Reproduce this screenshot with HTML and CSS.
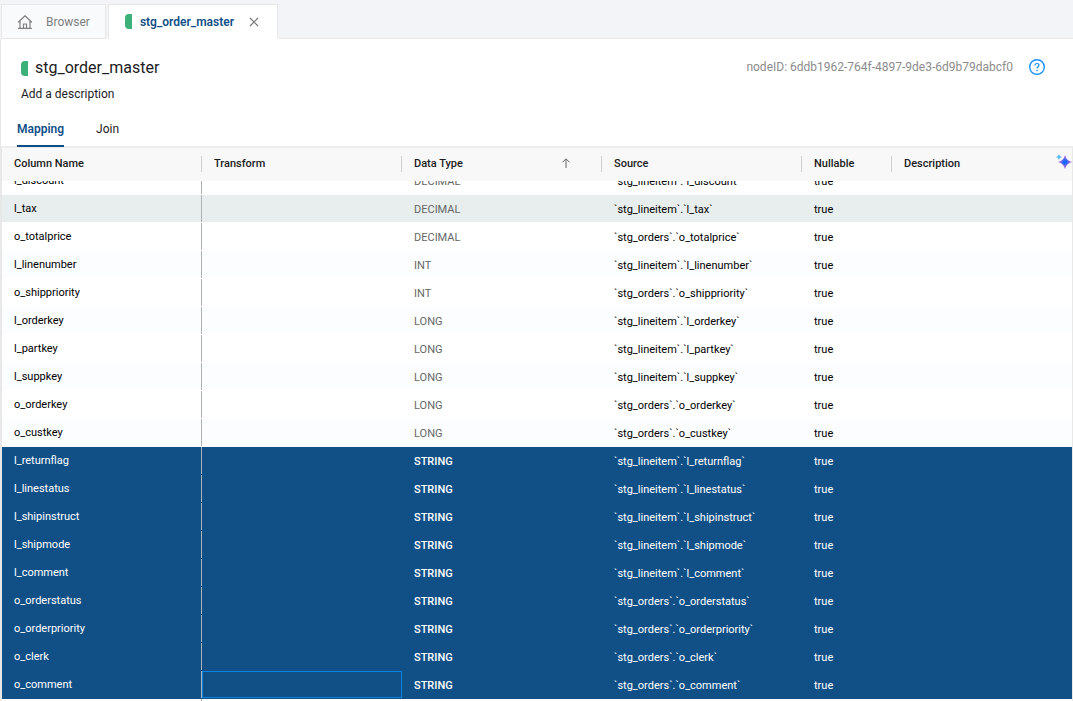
FILE: index.html
```html
<!DOCTYPE html>
<html lang="en">
<head>
    <meta charset="UTF-8">
    <title>stg_order_master</title>
    <link rel="stylesheet" href="styles.css">
</head>
<body>
    <nav class="tabs">
        <button class="tab" type="button">
            <svg class="home-icon" viewBox="0 0 16 16" fill="none" stroke="#808080" stroke-width="1.2" stroke-linejoin="round" stroke-linecap="round"><path d="M1.5 8 8 1.7 14.5 8M3 7v7.4h10V7M6.5 14.4V10h3v4.4M1.6 14.4h12.8"/></svg>
            <span>Browser</span>
        </button>
        <div class="tab active">
            <span class="node-mark"></span>
            <span>stg_order_master</span>
            <button class="close" type="button" aria-label="Close tab">
                <svg viewBox="0 0 10 10" width="10" height="10" stroke="#777" stroke-width="1.2"><path d="M1 1l8 8M9 1l-8 8"/></svg>
            </button>
        </div>
        <div class="tabs-rest"></div>
    </nav>

    <main class="panel">
        <header class="node-header">
            <div>
                <h1><span class="node-mark"></span>stg_order_master</h1>
                <button class="add-description" type="button">Add a description</button>
            </div>
            <div class="node-id">
                <span>nodeID: 6ddb1962-764f-4897-9de3-6d9b79dabcf0</span>
                <button class="help" type="button" aria-label="Help">
                    <svg viewBox="0 0 16 16" width="16" height="16" fill="none" stroke="#1890ff"><circle cx="8" cy="8" r="7.3" stroke-width="1.4"/><path d="M6 6.5c0-1.3.9-2 2-2s2 .7 2 1.8c0 1.4-2 1.5-2 3.1" stroke-width="1.2"/><circle cx="8" cy="11.5" r=".8" fill="#1890ff" stroke="none"/></svg>
                </button>
            </div>
        </header>

        <div class="subtabs">
            <button class="subtab active" type="button">Mapping</button>
            <button class="subtab" type="button">Join</button>
        </div>

        <div class="grid" id="grid">
            <table>
                <colgroup>
                    <col class="wide"><col class="wide"><col class="wide"><col class="wide"><col class="narrow"><col>
                </colgroup>
                <thead>
                    <tr>
                        <th>Column Name</th>
                        <th>Transform</th>
                        <th>
                            <div class="sorted">Data Type
                                <svg viewBox="0 0 10 10" width="10" height="10" fill="none" stroke="#666"><path d="M5 10V1M1.5 4.3 5 .8l3.5 3.5"/></svg>
                            </div>
                        </th>
                        <th>Source</th>
                        <th>Nullable</th>
                        <th>Description
                            <button class="sparkle" type="button" aria-label="Generate descriptions">
                                <svg viewBox="0 0 16 16" width="16" height="16">
                                    <defs>
                                        <radialGradient id="spark"><stop offset="0.2" stop-color="#1668ff"/><stop offset="0.7" stop-color="#a466e0"/></radialGradient>
                                    </defs>
                                    <path fill="#4cbcf5" d="M3 0l.9 2.100L6 3l-2.100.9L3 6l-.9-2.100L0 3l2.100-.9z"/>
                                    <path fill="url(#spark)" d="M9 1Q10.300 6.700 16 8 10.300 9.300 9 15 7.700 9.300 2 8 7.700 6.700 9 1z"/>
                                </svg>
                            </button>
                        </th>
                    </tr>
                </thead>
                <tbody>
                    <tr><td>l_discount</td><td></td><td>DECIMAL</td><td>`stg_lineitem`.`l_discount`</td><td>true</td><td></td></tr>
                    <tr class="hover"><td>l_tax</td><td></td><td>DECIMAL</td><td>`stg_lineitem`.`l_tax`</td><td>true</td><td></td></tr>
                    <tr><td>o_totalprice</td><td></td><td>DECIMAL</td><td>`stg_orders`.`o_totalprice`</td><td>true</td><td></td></tr>
                    <tr><td>l_linenumber</td><td></td><td>INT</td><td>`stg_lineitem`.`l_linenumber`</td><td>true</td><td></td></tr>
                    <tr><td>o_shippriority</td><td></td><td>INT</td><td>`stg_orders`.`o_shippriority`</td><td>true</td><td></td></tr>
                    <tr><td>l_orderkey</td><td></td><td>LONG</td><td>`stg_lineitem`.`l_orderkey`</td><td>true</td><td></td></tr>
                    <tr><td>l_partkey</td><td></td><td>LONG</td><td>`stg_lineitem`.`l_partkey`</td><td>true</td><td></td></tr>
                    <tr><td>l_suppkey</td><td></td><td>LONG</td><td>`stg_lineitem`.`l_suppkey`</td><td>true</td><td></td></tr>
                    <tr><td>o_orderkey</td><td></td><td>LONG</td><td>`stg_orders`.`o_orderkey`</td><td>true</td><td></td></tr>
                    <tr><td>o_custkey</td><td></td><td>LONG</td><td>`stg_orders`.`o_custkey`</td><td>true</td><td></td></tr>
                    <tr class="selected"><td>l_returnflag</td><td></td><td>STRING</td><td>`stg_lineitem`.`l_returnflag`</td><td>true</td><td></td></tr>
                    <tr class="selected"><td>l_linestatus</td><td></td><td>STRING</td><td>`stg_lineitem`.`l_linestatus`</td><td>true</td><td></td></tr>
                    <tr class="selected"><td>l_shipinstruct</td><td></td><td>STRING</td><td>`stg_lineitem`.`l_shipinstruct`</td><td>true</td><td></td></tr>
                    <tr class="selected"><td>l_shipmode</td><td></td><td>STRING</td><td>`stg_lineitem`.`l_shipmode`</td><td>true</td><td></td></tr>
                    <tr class="selected"><td>l_comment</td><td></td><td>STRING</td><td>`stg_lineitem`.`l_comment`</td><td>true</td><td></td></tr>
                    <tr class="selected"><td>o_orderstatus</td><td></td><td>STRING</td><td>`stg_orders`.`o_orderstatus`</td><td>true</td><td></td></tr>
                    <tr class="selected"><td>o_orderpriority</td><td></td><td>STRING</td><td>`stg_orders`.`o_orderpriority`</td><td>true</td><td></td></tr>
                    <tr class="selected"><td>o_clerk</td><td></td><td>STRING</td><td>`stg_orders`.`o_clerk`</td><td>true</td><td></td></tr>
                    <tr class="selected"><td>o_comment</td><td class="focused"></td><td>STRING</td><td>`stg_orders`.`o_comment`</td><td>true</td><td></td></tr>
                    <tr class="empty"><td></td><td></td><td></td><td></td><td></td><td></td></tr>
                </tbody>
            </table>
        </div>
    </main>

    <script>
        // open the grid scrolled half a row down
        document.getElementById('grid').scrollTop = 14;
    </script>
</body>
</html>
```

FILE: styles.css
```css
* { box-sizing: border-box; }
body { margin: 0; height: 100vh; display: flex; flex-direction: column; font-family: Roboto, "Liberation Sans", sans-serif; font-size: 12px; color: #1c1c1c; background: #f3f4f8; }
button { font: inherit; color: inherit; background: none; border: none; padding: 0; cursor: pointer; }
svg { display: block; }

.tabs { display: flex; height: 39px; padding: 4px 0 0 1px; }
.tab { display: flex; align-items: center; border: 1px solid #e8e8e8; background: #f9fafc; color: #808080; padding: 0 15px; }
.tab.active { background: #fff; border-bottom-color: #fff; color: #0f4f87; font-weight: 600; padding: 0 18px 0 16px; }
.tabs .tab:first-child { margin-right: 2px; }
.tabs-rest { flex: 1; border-bottom: 1px solid #e8e8e8; }
.home-icon { width: 16px; height: 16px; margin-right: 13px; }
.node-mark { width: 7px; height: 15px; margin-right: 8px; background: #3cb179; border-radius: 4px 0 0 4px; }
.close { margin-left: 15px; }

.panel { flex: 1; min-height: 0; display: flex; flex-direction: column; background: #fff; border-left: 1px solid #e8e8e8; }
.node-header { display: flex; justify-content: space-between; padding: 18px 28px 0 20px; }
h1 { display: flex; align-items: center; margin: 0; font-size: 16px; font-weight: 400; line-height: 22px; }
h1 .node-mark { margin-right: 7px; }
.add-description { display: block; margin-top: 7px; line-height: 16px; }
.node-id { display: flex; align-items: center; gap: 16px; height: 20px; color: #8c8c8c; }

.subtabs { display: flex; gap: 32px; padding: 16px 16px 0; border-bottom: 2px solid #ececec; }
.subtab { height: 29px; padding-bottom: 5px; margin-bottom: -1px; line-height: 20px; border-bottom: 2px solid transparent; }
.subtab.active { color: #0f4f87; font-weight: 600; border-bottom-color: #0f4f87; }

.grid { flex: 1; min-height: 0; overflow: hidden; border-left: 1px solid #e8e8e8; border-right: 1px solid #e8e8e8; }
table { width: 100%; table-layout: fixed; border-collapse: separate; border-spacing: 0; font-size: 11px; }
col.wide { width: 200px; }
col.narrow { width: 90px; }
th { position: sticky; top: 0; z-index: 1; height: 33px; padding: 0 12px 3px; text-align: left; font-weight: 500; background: #f8f8f8; }
th:not(:last-child)::after { content: ""; position: absolute; right: 0; top: 8px; width: 1px; height: 16px; background: #d0d0d0; }
.sorted { display: flex; align-items: center; justify-content: space-between; padding-right: 19px; }
.sparkle { position: absolute; right: 0; top: 6px; }

td { position: relative; height: 28px; padding: 2px 12px 0; border-bottom: 1px solid #fff; white-space: nowrap; overflow: hidden; color: #000; }
td:first-child { padding-top: 0; padding-bottom: 1px; }
td:first-child::after { content: ""; position: absolute; right: 0; top: 0; bottom: 0; width: 1px; background: #adb2b5; }
td:nth-child(3) { color: #666; }
tr:nth-child(even) td { background: #fcfdfe; }
tr.hover td { background: #e8eeee; }
tr.selected td { background: #115087; border-color: #115087; color: #fff; }
tr.selected td:nth-child(3) { font-weight: 500; }
tr.empty td { background: #fff; }
td.focused { box-shadow: inset 0 0 0 1px #0a84e0; }
```
